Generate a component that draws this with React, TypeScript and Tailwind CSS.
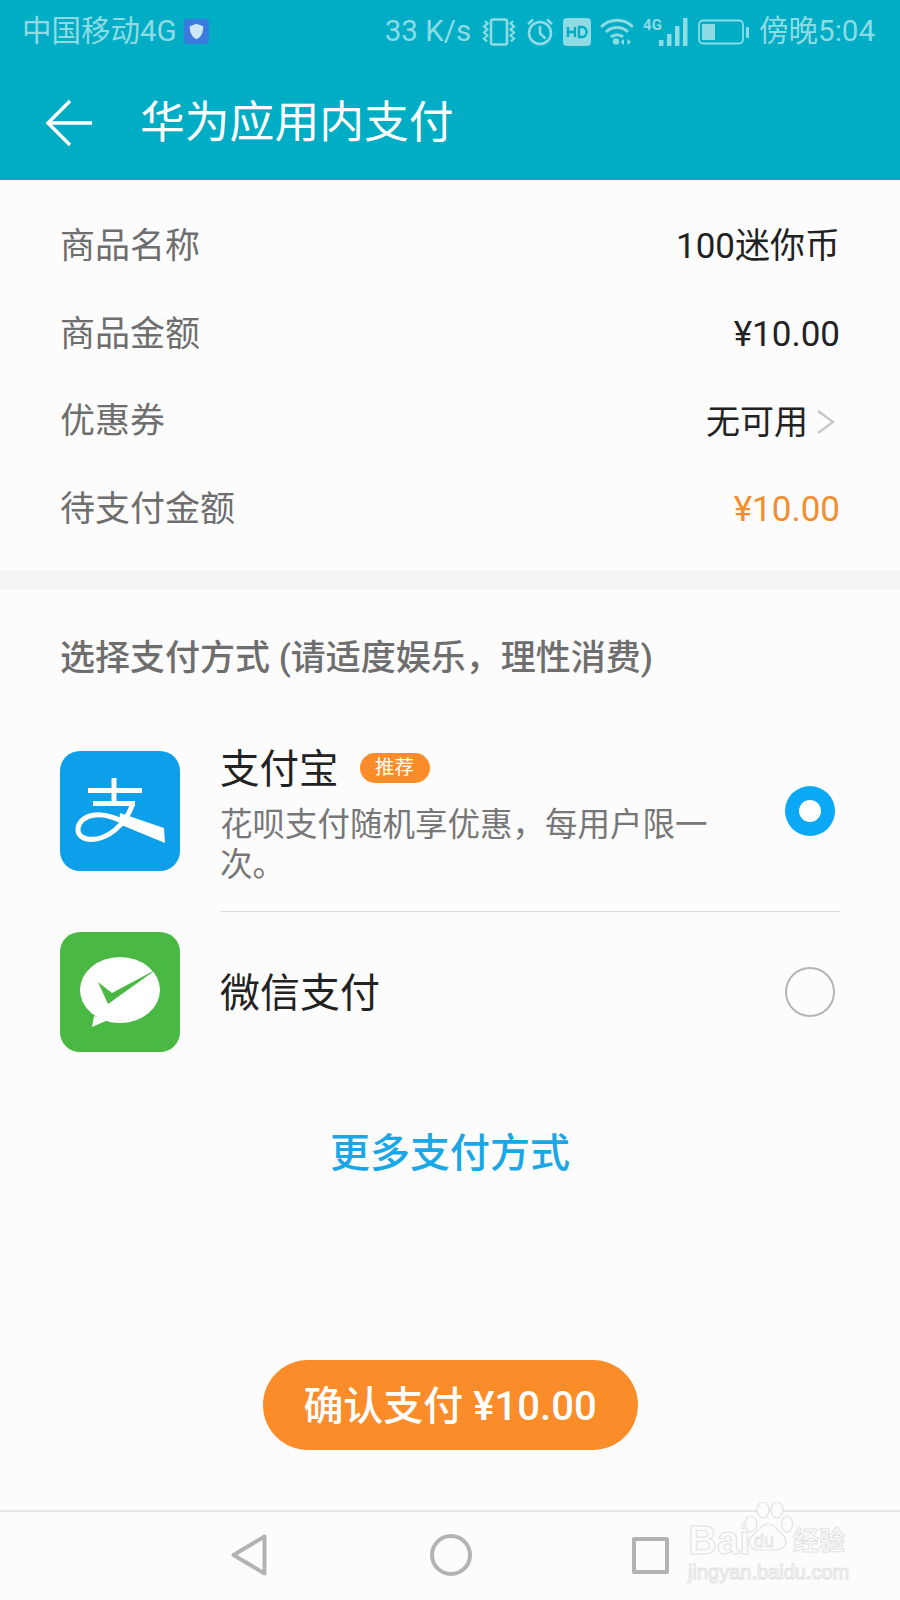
import React from "react";

const rowCls = "flex items-center justify-between h-[87.5px] px-[60px] text-[35px] leading-none";

function Vibrate() {
  return (
    <svg width="36" height="30" viewBox="0 0 36 30" fill="none" stroke="currentColor" strokeWidth="2.6">
      <rect x="10" y="2.500" width="16" height="25" rx="2" />
      <path d="M4 4l2.500 2.500L3 9.500l3.500 3L3 15.500l3.500 3L3 21.500l3 3M32 4l-2.500 2.500L33 9.500l-3.500 3 3.500 3-3.500 3 3.500 3-3 3" strokeWidth="2.200" />
    </svg>
  );
}
function Alarm() {
  return (
    <svg width="28" height="30" viewBox="0 0 28 30" fill="none" stroke="currentColor" strokeWidth="2.600">
      <circle cx="14" cy="16" r="11" />
      <path d="M14 9v7.500l5.500 5M2 7l5-4.500M26 7l-5-4.500" />
    </svg>
  );
}
function HD() {
  return (
    <svg width="28" height="28" viewBox="0 0 28 28">
      <rect x="0" y="0" width="28" height="28" rx="4" fill="currentColor" />
      <path d="M5 9v10M12 9v10M5 14h7M16 9v10h3c6 0 6-10 0-10z" fill="none" stroke="#00adc4" strokeWidth="2.400" />
    </svg>
  );
}
function Wifi() {
  return (
    <svg width="34" height="28" viewBox="0 0 34 28" fill="none" stroke="currentColor" strokeWidth="3">
      <path d="M1 9c9-9 23-9 32 0M6 14c6-6 16-6 22 0M11 19c3.500-3 8.500-3 12 0" />
      <circle cx="16" cy="23.500" r="3.200" fill="currentColor" stroke="none" />
      <path d="M24 21l-3.500 3 3.500 3zM27.500 21l3.500 3-3.500 3z" fill="currentColor" stroke="none" />
    </svg>
  );
}
function Signal() {
  return (
    <svg width="46" height="30" viewBox="0 0 46 30" fill="currentColor">
      <rect x="16" y="23" width="4.500" height="6" />
      <rect x="24" y="17" width="4.500" height="12" />
      <rect x="32" y="9" width="4.500" height="20" />
      <rect x="40" y="1" width="4.500" height="28" />
    </svg>
  );
}
function Battery() {
  return (
    <svg width="52" height="26" viewBox="0 0 52 26" fill="none">
      <rect x="1" y="1.500" width="44" height="23" rx="4" stroke="currentColor" strokeWidth="1.800" />
      <rect x="4" y="5" width="13" height="16" fill="currentColor" />
      <rect x="48" y="8" width="3" height="11" rx="1" fill="currentColor" />
    </svg>
  );
}

function AlipayLogo() {
  return (
    <div className="w-[120px] h-[120px] rounded-[20px] bg-[#0d9fe9] shrink-0">
      <svg width="120" height="120" viewBox="0 0 120 120" fill="none">
        <path d="M28 39.500h54M54 27v24M33 52.500h42" stroke="#fff" strokeWidth="5" />
        <path d="M73 52C66 74 46 91 27 88 13 86 15 66 35 64c15-1.500 28 7 45 15" stroke="#fff" strokeWidth="5" />
        <path d="M60 62l44 15 1 15-46-19z" fill="#fff" />
      </svg>
    </div>
  );
}
function WechatLogo() {
  return (
    <div className="w-[120px] h-[120px] rounded-[20px] bg-[#4ab944] shrink-0">
      <svg width="120" height="120" viewBox="0 0 120 120">
        <ellipse cx="60" cy="58" rx="40" ry="33" fill="#fff" />
        <path d="M34 84l-2 11 16-7z" fill="#fff" />
        <path d="M38 50l14 11 45-24-49 35z" fill="#4ab944" />
      </svg>
    </div>
  );
}

function Watermark() {
  const outline = "text-transparent [-webkit-text-stroke:1px_#e2e2e2]";
  return (
    <div className="absolute left-[688px] top-[1502px] w-[165px] h-[80px] font-['Liberation_Sans','Noto_Sans_CJK_SC',sans-serif]">
      <span className={`absolute left-0 top-[16px] text-[40px] leading-[44px] font-bold ${outline}`}>Bai</span>
      <span className={`absolute left-[105px] top-[24px] text-[26px] leading-[30px] font-bold ${outline}`}>经验</span>
      <span className={`absolute left-0 top-[58px] text-[20px] leading-[24px] ${outline}`}>jingyan.baidu.com</span>
      <svg className="absolute left-[55px] top-0" width="50" height="56" viewBox="0 0 50 56" fill="#fcfcfc" stroke="#e2e2e2" strokeWidth="1.200">
        <ellipse cx="8" cy="22" rx="6" ry="8" />
        <ellipse cx="20" cy="8" rx="6" ry="8" />
        <ellipse cx="34" cy="8" rx="6" ry="8" />
        <ellipse cx="44" cy="22" rx="5.500" ry="8" />
        <path d="M25 22c7 0 10 7 15 11 6 6 2 15-7 15H15C7 48 3 39 10 33c6-4 8-11 15-11z" />
      </svg>
      <span className="absolute left-[66px] top-[29px] text-[18px] leading-[20px] text-transparent [-webkit-text-stroke:0.8px_#e2e2e2]">du</span>
    </div>
  );
}

export default function App() {
  return (
    <div className="relative w-[900px] h-[1600px] flex flex-col bg-[#fcfcfc] overflow-hidden font-['Roboto','Noto_Sans_CJK_SC',sans-serif]">
      <header className="h-[180px] bg-[#00adc4] shrink-0 flex flex-col">
        <div className="h-[62px] pt-[1px] pl-[22px] pr-[25px] flex items-center justify-between text-[29.500px] leading-none text-[#8fdbe4]">
          <div className="flex items-center gap-[7px]">
            <span>中国移动4G</span>
            <svg width="25" height="25" viewBox="0 0 26 26">
              <rect width="26" height="26" rx="3" fill="#3b7be0" />
              <path d="M13 5l7 2.500c0 7-2 11-7 13.500-5-2.500-7-6.500-7-13.500z" fill="#cfe6f5" />
            </svg>
          </div>
          <div className="flex items-center gap-[9px]">
            <span className="mr-[1px]">33 K/s</span>
            <Vibrate />
            <Alarm />
            <HD />
            <Wifi />
            <div className="relative">
              <Signal />
              <span className="absolute left-0 top-[1px] text-[15px] font-bold leading-none">4G</span>
            </div>
            <Battery />
            <span>傍晚5:04</span>
          </div>
        </div>
        <div className="flex items-center flex-1 pt-[4px]">
          <svg className="ml-[45px]" width="48" height="48" viewBox="0 0 48 48" fill="none" stroke="#fff" strokeWidth="3.500">
            <path d="M47 24H3M25 2L3 24l22 22" />
          </svg>
          <h1 className="ml-[47px] text-[44.800px] leading-none text-white font-normal">华为应用内支付</h1>
        </div>
      </header>

      <section className="pt-[23px] pb-[17px] shrink-0">
        <div className={rowCls}>
          <span className="text-[#6e6e6e]">商品名称</span>
          <span className="text-[#222]">100迷你币</span>
        </div>
        <div className={rowCls}>
          <span className="text-[#6e6e6e]">商品金额</span>
          <span className="text-[#222]">¥10.00</span>
        </div>
        <div className={rowCls}>
          <span className="text-[#6e6e6e]">优惠券</span>
          <div className="flex items-center gap-[8px] pr-[5px]">
            <span className="text-[#222] text-[34px]">无可用</span>
            <svg width="19" height="26" viewBox="0 0 19 26" fill="none" stroke="#c8c8c8" strokeWidth="2.500">
              <path d="M2 2l15 11L2 24" />
            </svg>
          </div>
        </div>
        <div className={rowCls}>
          <span className="text-[#6e6e6e]">待支付金额</span>
          <span className="text-[#f28e2f]">¥10.00</span>
        </div>
      </section>

      <div className="h-[20px] bg-[#f5f5f5] shrink-0" />

      <section className="px-[60px] flex-1 flex flex-col">
        <h2 className="mt-[49px] text-[35px] leading-[40px] font-medium text-[#6e6e6e]">选择支付方式 (请适度娱乐，理性消费)</h2>

        <div className="mt-[72px] flex">
          <AlipayLogo />
          <div className="ml-[41px] flex-1 border-b border-[#d9d9d9] h-[161px]">
            <div className="flex items-start justify-between">
              <div className="w-[525px]">
                <div className="flex items-center h-[38px] -ml-[1px]">
                  <span className="text-[39.500px] leading-none text-[#222]">支付宝</span>
                  <span className="ml-[21px] -mt-[5px] w-[70px] h-[30px] rounded-full bg-[#fb8c2a] text-white text-[19.500px] leading-[30px] text-center">推荐</span>
                </div>
                <p className="mt-[16px] -ml-[1px] text-[32.500px] leading-[40px] text-[#777]">花呗支付随机享优惠，每用户限一次。</p>
              </div>
              <div className="mt-[35px] mr-[5px] w-[50px] h-[50px] rounded-full bg-[#0aa8f5] flex items-center justify-center">
                <div className="w-[22px] h-[22px] rounded-full bg-white" />
              </div>
            </div>
          </div>
        </div>

        <div className="mt-[20px] flex items-center">
          <WechatLogo />
          <span className="ml-[40px] pt-[3px] flex-1 text-[40px] leading-none text-[#222]">微信支付</span>
          <div className="mr-[5px] w-[50px] h-[50px] rounded-full border-2 border-[#b5b5b5]" />
        </div>

        <a className="mt-[80px] text-center text-[40px] leading-[44px] font-medium text-[#1aa7e8]">更多支付方式</a>

        <div className="mt-[184px] flex justify-center">
          <button className="w-[375px] h-[90px] pt-[3px] rounded-full bg-[#fb8c2a] text-white text-[40px] font-medium leading-none">确认支付 ¥10.00</button>
        </div>
      </section>

      <nav className="h-[90px] shrink-0 border-t-2 border-[#e5e5e5] flex items-center justify-center pb-[2px]">
        <svg className="mr-[163px]" width="36" height="42" viewBox="0 0 36 42" fill="none" stroke="#b3b3b3" strokeWidth="4" strokeLinejoin="round">
          <path d="M2.500 21L33.500 2.500v37z" />
        </svg>
        <svg className="mr-[160px]" width="42" height="42" viewBox="0 0 42 42" fill="none" stroke="#b3b3b3" strokeWidth="4">
          <circle cx="21" cy="21" r="19" />
        </svg>
        <svg width="37" height="37" viewBox="0 0 37 37" fill="none" stroke="#b3b3b3" strokeWidth="4" strokeLinejoin="round">
          <rect x="2" y="2" width="33" height="33" />
        </svg>
      </nav>

      <Watermark />
    </div>
  );
}
